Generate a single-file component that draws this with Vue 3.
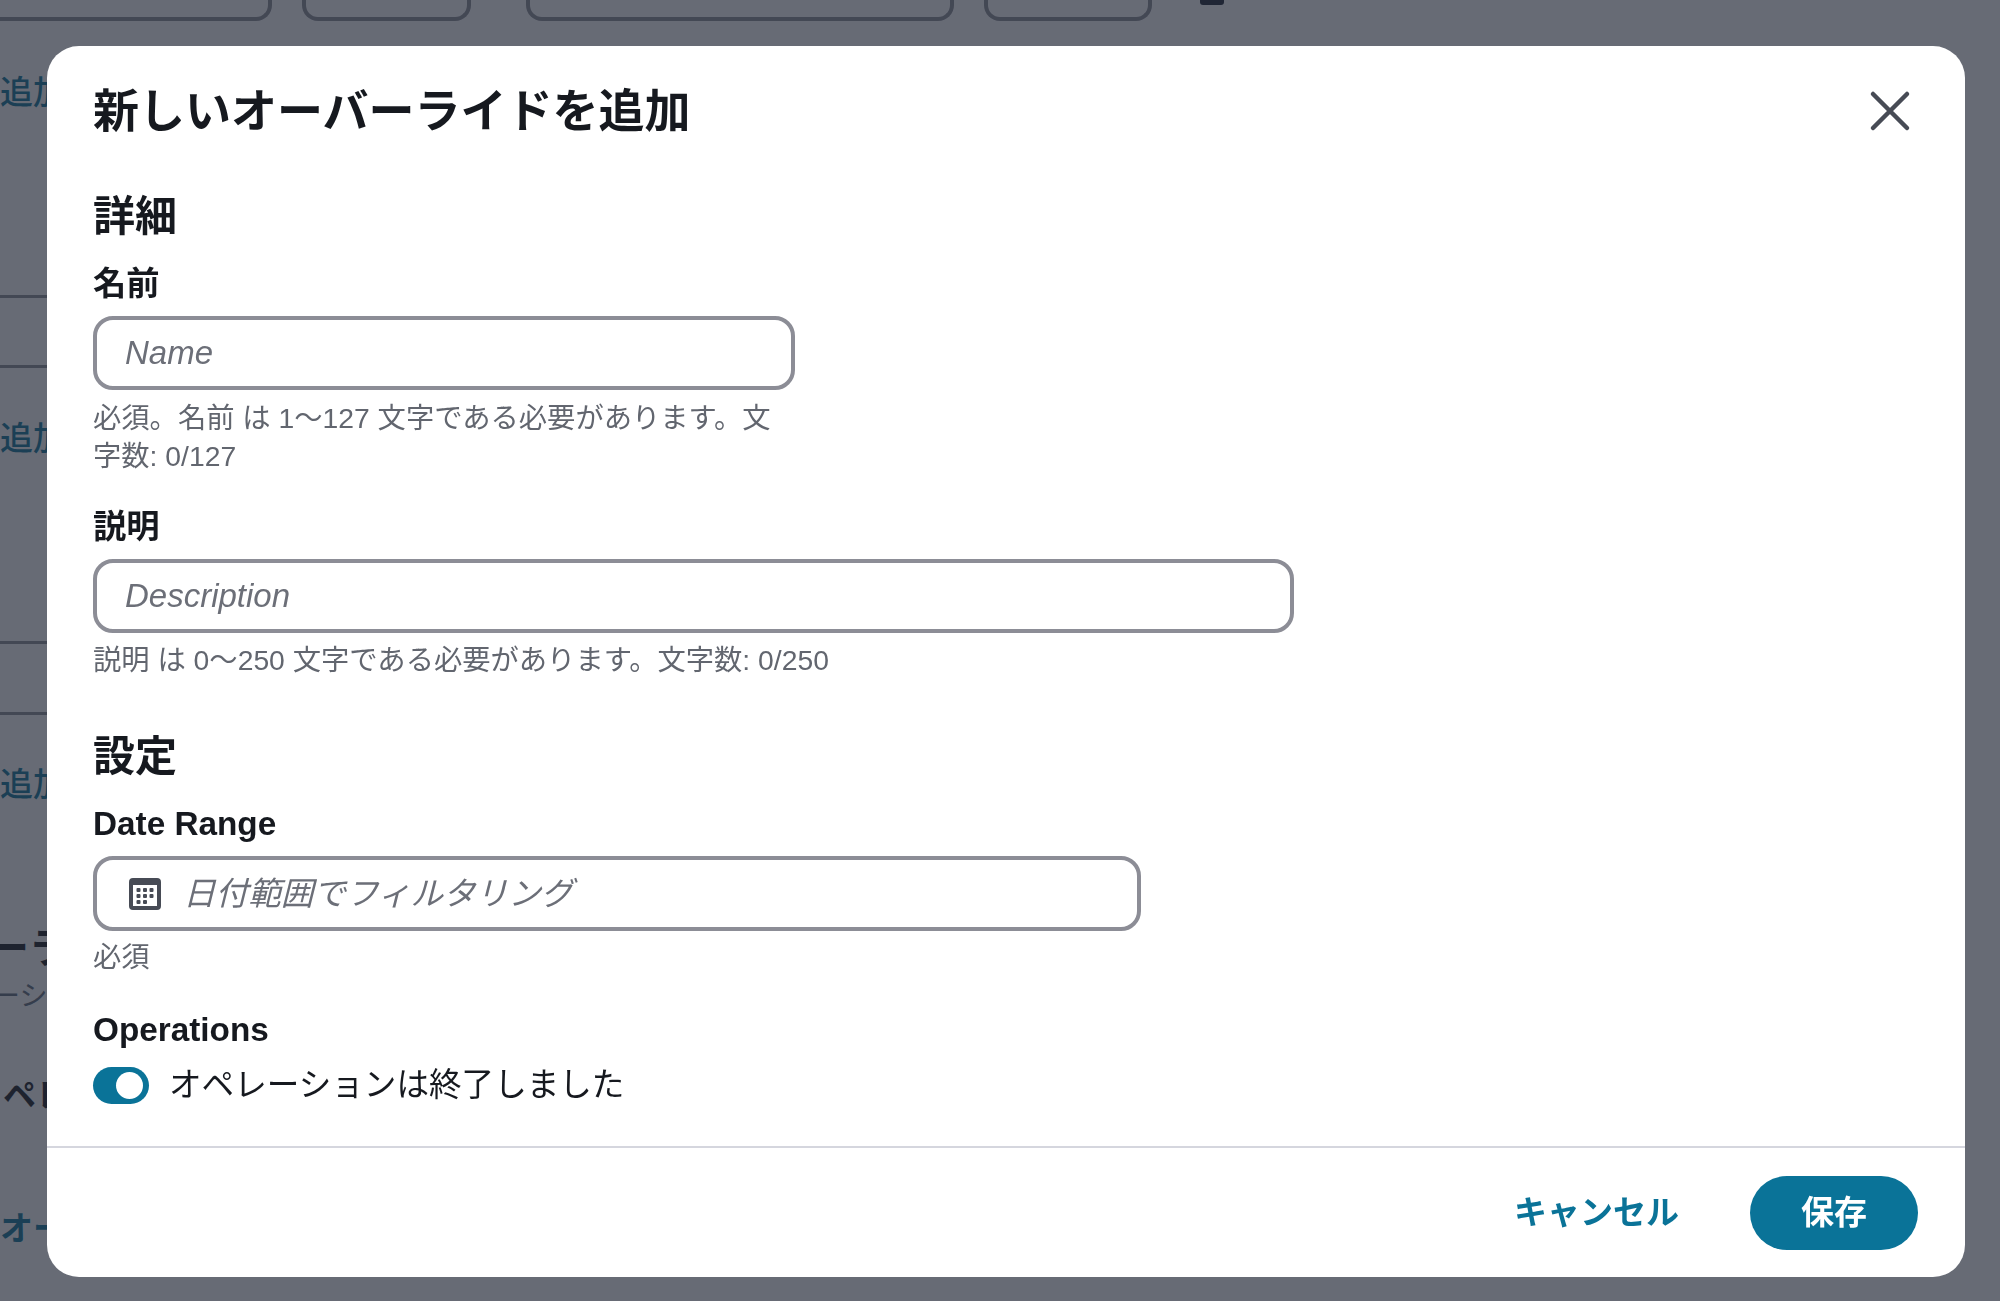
<template>
  <div class="page">
    <div class="filters">
      <div class="filter f1"></div>
      <div class="filter f2"></div>
      <div class="filter f3"></div>
      <div class="filter f4"></div>
      <div class="filter-mark"></div>
    </div>
    <div class="bg-rows">
      <a class="bg-link first">追加</a>
      <div class="bg-line l1"></div>
      <div class="bg-line l2"></div>
      <a class="bg-link second">追加</a>
      <div class="bg-line l3"></div>
      <div class="bg-line l4"></div>
      <a class="bg-link third">追加</a>
      <div class="bg-title">ーラ</div>
      <div class="bg-sub">ーシ</div>
      <div class="bg-title small">ペレ</div>
      <a class="bg-link last">オーバ</a>
    </div>
  </div>

  <div class="overlay">
    <div class="modal">
      <header class="modal-header">
        <h1>新しいオーバーライドを追加</h1>
        <button class="close" aria-label="閉じる">
          <svg width="42" height="42" viewBox="0 0 42 42">
            <path d="M4 4 L38 38 M38 4 L4 38" stroke="#474b55" stroke-width="4.5" stroke-linecap="round" fill="none" />
          </svg>
        </button>
      </header>

      <div class="modal-body">
        <h2>詳細</h2>
        <label class="label">名前</label>
        <input class="input name" placeholder="Name" />
        <p class="help name-help">必須。名前 は 1〜127 文字である必要があります。文字数: 0/127</p>

        <label class="label spaced">説明</label>
        <input class="input desc" placeholder="Description" />
        <p class="help">説明 は 0〜250 文字である必要があります。文字数: 0/250</p>

        <h2 class="second-section">設定</h2>
        <label class="label">Date Range</label>
        <div class="input date">
          <svg width="32" height="32" viewBox="0 0 32 32">
            <rect x="2" y="2" width="28" height="28" rx="2" fill="#fff" stroke="#474b55" stroke-width="4" />
            <rect x="2" y="2" width="28" height="5" fill="#474b55" />
            <g fill="#474b55">
              <rect x="7.5" y="10" width="4" height="4" rx="1" />
              <rect x="14" y="10" width="4" height="4" rx="1" />
              <rect x="20.5" y="10" width="4" height="4" rx="1" />
              <rect x="7.5" y="16" width="4" height="4" rx="1" />
              <rect x="14" y="16" width="4" height="4" rx="1" />
              <rect x="20.5" y="16" width="4" height="4" rx="1" />
              <rect x="7.5" y="22" width="4" height="4" rx="1" />
              <rect x="14" y="22" width="4" height="4" rx="1" />
            </g>
          </svg>
          <input placeholder="日付範囲でフィルタリング" />
        </div>
        <p class="help date-help">必須</p>

        <label class="label spaced">Operations</label>
        <div class="toggle-row">
          <span class="toggle"><span class="knob"></span></span>
          <span>オペレーションは終了しました</span>
        </div>
      </div>

      <footer class="modal-footer">
        <button class="cancel">キャンセル</button>
        <button class="save">保存</button>
      </footer>
    </div>
  </div>
</template>

<script setup>
</script>

<style>
html, body {
  margin: 0;
  height: 1301px;
  overflow: hidden;
  background: #fff;
}
</style>

<style scoped>
.page {
  height: 1301px;
  overflow: hidden;
  font-family: "Liberation Sans", "Noto Sans CJK JP", sans-serif;
}

.filters {
  display: flex;
  height: 21px;
  gap: 30px;
}

.filter {
  height: 21px;
  box-sizing: border-box;
  border: 4px solid #8c8d96;
  border-top: 0;
  border-radius: 0 0 16px 16px;
}

.f1 { width: 272px; border-left: 0; border-radius: 0 0 16px 0; }
.f2 { width: 169px; }
.f3 { width: 428px; margin-left: 25px; }
.f4 { width: 168px; }

.filter-mark {
  width: 24px;
  height: 5px;
  margin-left: 18px;
  background: #1b2333;
  border-radius: 0 0 3px 3px;
}

.bg-rows {
  display: flex;
  flex-direction: column;
  align-items: flex-start;
}

.bg-link {
  color: #0a7398;
  font-size: 33px;
  line-height: 40px;
  font-weight: 500;
  white-space: nowrap;
}

.bg-link.first { margin-top: 52px; }
.bg-link.second { margin-top: 51px; }
.bg-link.third { margin-top: 50px; }
.bg-link.last { margin-top: 91px; font-weight: 700; }

.bg-line {
  width: 47px;
  height: 3px;
  background: #8c8d96;
}

.l1 { margin-top: 182px; }
.l2 { margin-top: 67px; }
.l3 { margin-top: 182px; }
.l4 { margin-top: 68px; }

.bg-title {
  margin-top: 119px;
  margin-left: -12px;
  font-size: 41px;
  line-height: 50px;
  font-weight: 700;
  color: #16191f;
  white-space: nowrap;
}

.bg-title.small {
  margin-top: 60px;
  margin-left: 3px;
  font-size: 33px;
  line-height: 44px;
}

.bg-sub {
  margin-top: 6px;
  margin-left: -8px;
  font-size: 28px;
  line-height: 34px;
  color: #5f6b7a;
}

.overlay {
  position: fixed;
  inset: 0;
  background: rgba(35, 40, 55, 0.69);
  padding: 46px 35px 24px 47px;
  box-sizing: border-box;
  display: flex;
  font-family: "Liberation Sans", "Noto Sans CJK JP", sans-serif;
  color: #16191f;
}

.modal {
  flex: 1;
  background: #fff;
  border-radius: 32px;
  display: flex;
  flex-direction: column;
  overflow: hidden;
}

.modal-header {
  display: flex;
  justify-content: space-between;
  align-items: center;
  padding: 38px 54px 0 46px;
}

h1 {
  margin: 0;
  font-size: 46px;
  line-height: 54px;
  font-weight: 700;
}

.close {
  display: flex;
  padding: 0;
  border: 0;
  background: none;
}

.modal-body {
  flex: 1;
  padding: 54px 46px 0;
  display: flex;
  flex-direction: column;
  align-items: flex-start;
}

h2 {
  margin: 0 0 22px;
  font-size: 42px;
  line-height: 50px;
  font-weight: 700;
}

h2.second-section {
  margin-top: 53px;
}

.label {
  display: block;
  font-size: 33.3px;
  line-height: 40px;
  font-weight: 700;
  margin-bottom: 12px;
}

.label.spaced {
  margin-top: 34px;
}

.input {
  box-sizing: border-box;
  height: 74px;
  border: 4px solid #8c8d96;
  border-radius: 20px;
  padding: 0 28px;
  font-family: inherit;
  font-size: 33px;
  background: #fff;
  outline: none;
}

.input::placeholder,
.date input::placeholder {
  color: #6c6f78;
  font-style: italic;
  opacity: 1;
}

.name { width: 702px; }
.desc { width: 1201px; }

.date {
  width: 1048px;
  height: 75px;
  display: flex;
  align-items: center;
  gap: 22px;
  padding: 0 32px;
}

.date input {
  flex: 1;
  min-width: 0;
  border: 0;
  padding: 0;
  font-family: inherit;
  font-size: 32.6px;
  outline: none;
}

.help {
  margin: 9px 0 0;
  font-size: 28.3px;
  line-height: 37px;
  color: #62666f;
}

.date-help {
  margin-top: 8px;
}

.name-help {
  width: 690px;
  line-height: 38px;
  margin-bottom: -2px;
}

.toggle-row {
  display: flex;
  align-items: center;
  gap: 20px;
  font-size: 32.6px;
  line-height: 38px;
  margin-top: 4px;
}

.toggle {
  width: 56px;
  height: 37px;
  border-radius: 19px;
  background: #0a7398;
  display: flex;
  align-items: center;
  justify-content: flex-end;
  padding-right: 6px;
  box-sizing: border-box;
}

.knob {
  width: 27px;
  height: 27px;
  border-radius: 50%;
  background: #fff;
}

.modal-footer {
  border-top: 2px solid #d5d6de;
  height: 131px;
  box-sizing: border-box;
  display: flex;
  justify-content: flex-end;
  align-items: center;
  gap: 71px;
  padding: 0 47px 0 0;
}

.modal-footer button {
  font-family: inherit;
  font-size: 33px;
  font-weight: 700;
  border: 0;
  padding: 0 0 5px;
}

.cancel {
  color: #0a7398;
  background: none;
}

.save {
  width: 168px;
  height: 74px;
  border-radius: 37px;
  background: #0a7398;
  color: #fff;
}
</style>
